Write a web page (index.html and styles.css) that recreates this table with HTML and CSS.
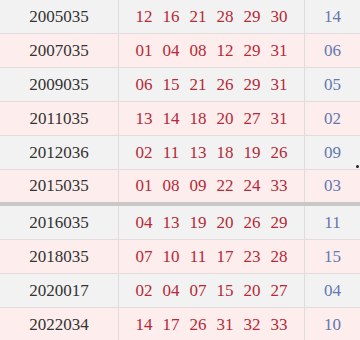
FILE: index.html
```html
<!DOCTYPE html>
<html lang="zh">
<head>
  <meta charset="UTF-8" />
  <title>开奖号码</title>
  <meta name="viewport" content="width=device-width, initial-scale=1" />
  <link rel="stylesheet" href="styles.css">
</head>
<body>

  <div class="tabla">
    <div class="fila gris">
      <div class="periodo">2005035</div>
      <div class="rojos"><span>12</span><span>16</span><span>21</span><span>28</span><span>29</span><span>30</span></div>
      <div class="azul">14</div>
    </div>
    <div class="fila rosa">
      <div class="periodo">2007035</div>
      <div class="rojos"><span>01</span><span>04</span><span>08</span><span>12</span><span>29</span><span>31</span></div>
      <div class="azul">06</div>
    </div>
    <div class="fila gris">
      <div class="periodo">2009035</div>
      <div class="rojos"><span>06</span><span>15</span><span>21</span><span>26</span><span>29</span><span>31</span></div>
      <div class="azul">05</div>
    </div>
    <div class="fila rosa">
      <div class="periodo">2011035</div>
      <div class="rojos"><span>13</span><span>14</span><span>18</span><span>20</span><span>27</span><span>31</span></div>
      <div class="azul">02</div>
    </div>
    <div class="fila gris">
      <div class="periodo">2012036</div>
      <div class="rojos"><span>02</span><span>11</span><span>13</span><span>18</span><span>19</span><span>26</span></div>
      <div class="azul">09</div>
    </div>
    <div class="fila rosa corte">
      <div class="periodo">2015035</div>
      <div class="rojos"><span>01</span><span>08</span><span>09</span><span>22</span><span>24</span><span>33</span></div>
      <div class="azul">03</div>
    </div>
    <div class="fila gris">
      <div class="periodo">2016035</div>
      <div class="rojos"><span>04</span><span>13</span><span>19</span><span>20</span><span>26</span><span>29</span></div>
      <div class="azul">11</div>
    </div>
    <div class="fila rosa">
      <div class="periodo">2018035</div>
      <div class="rojos"><span>07</span><span>10</span><span>11</span><span>17</span><span>23</span><span>28</span></div>
      <div class="azul">15</div>
    </div>
    <div class="fila gris">
      <div class="periodo">2020017</div>
      <div class="rojos"><span>02</span><span>04</span><span>07</span><span>15</span><span>20</span><span>27</span></div>
      <div class="azul">04</div>
    </div>
    <div class="fila rosa">
      <div class="periodo">2022034</div>
      <div class="rojos"><span>14</span><span>17</span><span>26</span><span>31</span><span>32</span><span>33</span></div>
      <div class="azul">10</div>
    </div>

    <div class="punto"></div>
  </div>

</body>
</html>
```

FILE: styles.css
```css
body {
  margin: 0;
  background: #fdeeee;
  font-family: "Liberation Serif", "Noto Sans CJK SC", serif;
  font-size: 17px;
}
.tabla {
  position: relative;
  width: 360px;
}
.fila {
  display: grid;
  grid-template-columns: 119px 186px 1fr;
  height: 34px;
  box-sizing: border-box;
  border-bottom: 1px solid #e3dcdc;
}
.fila.gris {
  background: #f2f2f2;
}
.fila.rosa {
  background: #fdeded;
}
.fila.corte {
  height: 36px;
  border-bottom: 4px solid #c8c8c8;
}
.fila > div {
  display: flex;
  align-items: center;
  justify-content: center;
}
.periodo {
  border-right: 1px solid #e0dcdc;
  color: #333;
}
.rojos {
  border-right: 1px solid #e0dcdc;
  color: #b52a36;
  gap: 10px;
}
.rojos span {
  width: 17px;
  text-align: center;
}
.azul {
  color: #6379b0;
}
.punto {
  position: absolute;
  right: 1px;
  top: 165px;
  width: 3px;
  height: 3px;
  border-radius: 50%;
  background: #222;
}
```
